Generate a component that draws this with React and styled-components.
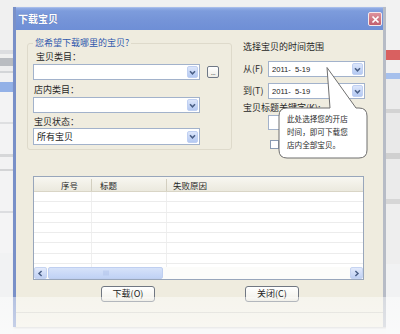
import React from "react";
import styled, { createGlobalStyle } from "styled-components";

const cjk = `"Noto Sans CJK SC", "Noto Sans", sans-serif`;
const latin = `"Liberation Sans", "Noto Sans CJK SC", sans-serif`;

const Global = createGlobalStyle`
  html, body { margin: 0; padding: 0; background: #f1f1f1; }
  body { font-family: ${cjk}; }
`;

const Page = styled.div`
  position: relative;
  width: 400px;
  height: 334px;
  overflow: hidden;
  display: flex;
  align-items: flex-start;
  background: #f1f1f1;
  font-family: ${cjk};
  font-size: 9px;
  color: #2b2b2b;
`;

const Desk = styled.div`
  width: ${(p) => p.$w}px;
  height: 100%;
  flex-shrink: 0;
  display: flex;
  flex-direction: column;
  background: #f1f2f3;
`;

const Stripe = styled.div`
  height: ${(p) => p.$h}px;
  flex-shrink: 0;
  background: ${(p) => p.$c || "transparent"};
`;

const Window = styled.div`
  margin-top: 7px;
  width: 373px;
  height: 320px;
  flex-shrink: 0;
  box-sizing: border-box;
  border-left: 3px solid #7990c8;
  border-right: 3px solid #b7bcc6;
  display: flex;
  flex-direction: column;
  box-shadow: 1px 1px 2px rgba(0, 0, 0, 0.2);
`;

const TitleBar = styled.div`
  height: 23px;
  flex-shrink: 0;
  box-sizing: border-box;
  display: flex;
  align-items: center;
  justify-content: space-between;
  padding: 0 1px 0 2px;
  border-top: 1px solid #a8bdea;
  background: linear-gradient(#93ade5 0, #7d9cdc 3px, #7594d8 55%, #6e8fd6 100%);
`;

const Title = styled.span`
  color: #ffffff;
  font-weight: 700;
  font-size: 10px;
  line-height: 12px;
  text-shadow: 0 0 1px rgba(40, 60, 120, 0.5);
`;

const CloseButton = styled.div`
  width: 14px;
  height: 14px;
  box-sizing: border-box;
  border: 1px solid #f4e8ec;
  border-radius: 2px;
  background: linear-gradient(#de929c, #c25f6e);
  display: flex;
  align-items: center;
  justify-content: center;
`;

const Body = styled.div`
  flex: 1;
  display: flex;
  flex-direction: column;
  background: #efecdf;
`;

const TopSection = styled.div`
  display: flex;
  align-items: flex-start;
  gap: 11px;
  padding: 7px 0 0 11px;
`;

const Group = styled.fieldset`
  margin: 0;
  min-width: 0;
  width: 205px;
  box-sizing: border-box;
  border: 1px solid #dedacb;
  border-radius: 3px;
  padding: 0 0 4px 5px;
  display: flex;
  flex-direction: column;
`;

const Legend = styled.legend`
  padding: 0 2px;
  color: #2f58ad;
  font-size: 9px;
  line-height: 12px;
`;

const FieldLabel = styled.div`
  height: 12px;
  line-height: 12px;
  margin-top: ${(p) => p.$mt || 0}px;
  padding-left: ${(p) => (p.$pl == null ? 3 : p.$pl)}px;
  font-size: 9px;
  color: #262626;
  white-space: nowrap;
`;

const ComboRow = styled.div`
  display: flex;
  align-items: center;
  gap: 7px;
  margin-top: ${(p) => p.$mt || 0}px;
`;

const Combo = styled.div`
  width: ${(p) => p.$w}px;
  height: ${(p) => p.$h || 16}px;
  flex-shrink: 0;
  box-sizing: border-box;
  border: 1px solid #a2b2cb;
  background: #ffffff;
  display: flex;
  align-items: center;
  justify-content: space-between;
  padding: 0 1px 0 3px;
`;

const ComboText = styled.span`
  font-family: ${(p) => (p.$latin ? latin : cjk)};
  font-size: ${(p) => (p.$latin ? "7.6px" : "9px")};
  color: #222;
  white-space: pre;
`;

const DropButton = styled.span`
  width: 11px;
  height: 12px;
  box-sizing: border-box;
  border: 1px solid #c0d0f2;
  border-radius: 2px;
  background: linear-gradient(#dce6fb, #b4c9f2);
  display: flex;
  align-items: center;
  justify-content: center;
  margin-left: auto;
`;

const EllipsisButton = styled.div`
  width: 12px;
  height: 12px;
  box-sizing: border-box;
  border: 1px solid #6f7886;
  border-radius: 2px;
  background: linear-gradient(#ffffff, #eeede6);
  display: flex;
  align-items: flex-end;
  justify-content: center;
  font-family: ${latin};
  font-size: 7px;
  line-height: 8px;
  letter-spacing: -0.5px;
  color: #333;
`;

const RangeColumn = styled.div`
  width: 127px;
  margin-top: 4px;
  display: flex;
  flex-direction: column;
`;

const RangeRow = styled.div`
  display: flex;
  align-items: center;
  margin-top: ${(p) => p.$mt || 0}px;
`;

const RangeLabel = styled.span`
  width: 25px;
  flex-shrink: 0;
  font-size: 9px;
  line-height: 12px;
  white-space: nowrap;
`;

const TextBox = styled.div`
  width: 97px;
  height: 15px;
  box-sizing: border-box;
  margin: 1px 0 0 25px;
  border: 1px solid #a2b2cb;
  background: #ffffff;
`;

const CheckRow = styled.div`
  display: flex;
  align-items: center;
  margin-top: 10px;
  padding-left: 27px;
`;

const CheckBox = styled.span`
  width: 9px;
  height: 9px;
  box-sizing: border-box;
  border: 1px solid #8a9ab2;
  background: #ffffff;
`;

const ResultList = styled.div`
  margin: 26px 0 0 17px;
  width: 331px;
  height: 104px;
  box-sizing: border-box;
  border: 1px solid #98a6bb;
  background: #ffffff;
  display: flex;
  flex-direction: column;
`;

const cols = "58px 75px 1fr";

const HeaderRow = styled.div`
  height: 15px;
  flex-shrink: 0;
  box-sizing: border-box;
  display: grid;
  grid-template-columns: ${cols};
  background: linear-gradient(#f8f7f1, #ebe9de);
  border-bottom: 1px solid #d9d5c6;
`;

const HeaderCell = styled.div`
  display: flex;
  align-items: center;
  padding-left: ${(p) => p.$pl}px;
  font-size: 8.5px;
  line-height: 12px;
  color: #262626;
  border-right: ${(p) => (p.$last ? "none" : "1px solid #d3cfc0")};
  margin: 2px 0;
`;

const Rows = styled.div`
  flex: 1;
  overflow: hidden;
  display: flex;
  flex-direction: column;
`;

const DataRow = styled.div`
  height: 10.3px;
  flex-shrink: 0;
  box-sizing: border-box;
  display: grid;
  grid-template-columns: ${cols};
  border-bottom: 1px solid #ececec;
`;

const DataCell = styled.div`
  border-right: ${(p) => (p.$last ? "none" : "1px solid #efefef")};
`;

const HScroll = styled.div`
  height: 12px;
  flex-shrink: 0;
  display: flex;
  align-items: center;
  background: #fcfcfa;
`;

const ScrollArrow = styled.div`
  width: 13px;
  height: 12px;
  box-sizing: border-box;
  border: 1px solid #c6d4f1;
  border-radius: 2px;
  background: linear-gradient(#e2eafb, #bfd0f3);
  display: flex;
  align-items: center;
  justify-content: center;
  margin-left: ${(p) => (p.$end ? "auto" : "0")};
`;

const ScrollThumb = styled.div`
  width: 115px;
  height: 12px;
  margin-left: 1px;
  box-sizing: border-box;
  border: 1px solid #bfcff0;
  border-radius: 2px;
  background: linear-gradient(#d6e2f9, #c0d2f5);
  display: flex;
  align-items: center;
  justify-content: center;
`;

const ButtonRow = styled.div`
  display: flex;
  gap: 90px;
  padding-left: 85px;
  margin-top: 6px;
`;

const PushButton = styled.div`
  width: 54px;
  height: 16px;
  box-sizing: border-box;
  border: 1px solid #707782;
  border-radius: 3px;
  background: linear-gradient(#ffffff, #f4f3ed 75%, #e3e1d6);
  display: flex;
  align-items: center;
  justify-content: center;
  font-size: 9px;
  line-height: 12px;
  color: #222;
`;

const Footer = styled.div`
  flex: 1;
  margin-top: 10px;
  border-top: 1px solid #cfcdc4;
`;

const Fade = styled.div`
  position: absolute;
  left: 0;
  top: 297px;
  width: 400px;
  height: 37px;
  background: linear-gradient(rgba(255, 255, 255, 0.45), rgba(255, 255, 255, 0.6));
  pointer-events: none;
`;

const Callout = styled.div`
  position: absolute;
  left: 277px;
  top: 64px;
  width: 92px;
  height: 96px;
`;

const CalloutShape = styled.svg`
  position: absolute;
  left: 0;
  top: 0;
`;

const CalloutText = styled.div`
  position: relative;
  padding: 48px 0 0 10px;
  font-size: 7.6px;
  line-height: 13px;
  letter-spacing: 0;
  color: #2a2a2a;
  white-space: nowrap;
`;

const Chevron = ({ dir = "down" }) => {
  const d =
    dir === "down"
      ? "M2 3.2 L4.5 5.8 L7 3.2"
      : dir === "left"
      ? "M5.6 2 L3 4.5 L5.6 7"
      : "M3.4 2 L6 4.5 L3.4 7";
  return (
    <svg width="9" height="9" viewBox="0 0 9 9">
      <path d={d} fill="none" stroke="#4a5f86" strokeWidth="1.5" />
    </svg>
  );
};

const Grip = () => (
  <svg width="6" height="6" viewBox="0 0 6 6">
    <path d="M1 0.5 V5.5 M3 0.5 V5.5 M5 0.5 V5.5" stroke="#a9bde6" strokeWidth="0.8" />
  </svg>
);

const CloseX = () => (
  <svg width="9" height="9" viewBox="0 0 9 9">
    <path d="M1.5 1.5 L7.5 7.5 M7.5 1.5 L1.5 7.5" stroke="#ffffff" strokeWidth="1.7" />
  </svg>
);

function ComboBox({ w, h, text, isLatin }) {
  return (
    <Combo $w={w} $h={h}>
      {text ? <ComboText $latin={isLatin}>{text}</ComboText> : null}
      <DropButton>
        <Chevron />
      </DropButton>
    </Combo>
  );
}

const leftStripes = [
  [50, "#f0f0f0"],
  [4, "#dcdde0"],
  [4, "#f0f0f0"],
  [8, "#b9bcc1"],
  [5, "#eeeeef"],
  [2, "#d3d5d8"],
  [9, "#f1f1f2"],
  [10, "#93b1e7"],
  [30, "#f3f3f4"],
  [2, "#dedfe1"],
  [30, "#f3f3f4"],
  [3, "#d6d7d9"],
  [12, "#f2f2f3"],
  [2, "#d3d4d6"],
  [40, "#f3f3f4"],
  [2, "#dcdde0"],
  [40, "#f4f4f5"],
];

const rightStripes = [
  [50, "#f2f2f2"],
  [10, "#d96060"],
  [13, "#f0f0f0"],
  [6, "#a6c0ec"],
  [30, "#ececec"],
  [4, "#d3d3d3"],
  [40, "#e9e9e9"],
  [6, "#d0d0d0"],
  [40, "#ebebeb"],
  [5, "#d6d6d6"],
  [60, "#eeeeee"],
];

export default function App() {
  const rows = Array.from({ length: 8 });
  return (
    <Page>
      <Global />
      <Desk $w={13}>
        {leftStripes.map(([h, c], i) => (
          <Stripe key={i} $h={h} $c={c} />
        ))}
      </Desk>

      <Window>
        <TitleBar>
          <Title>下载宝贝</Title>
          <CloseButton>
            <CloseX />
          </CloseButton>
        </TitleBar>

        <Body>
          <TopSection>
            <Group>
              <Legend>您希望下载哪里的宝贝?</Legend>
              <FieldLabel $mt={2}>宝贝类目：</FieldLabel>
              <ComboRow $mt={1}>
                <ComboBox w={167} />
                <EllipsisButton>...</EllipsisButton>
              </ComboRow>
              <FieldLabel $mt={4} $pl={1}>店内类目：</FieldLabel>
              <ComboRow $mt={1}>
                <ComboBox w={167} />
              </ComboRow>
              <FieldLabel $mt={3} $pl={1}>宝贝状态：</FieldLabel>
              <ComboRow>
                <ComboBox w={167} h={17} text="所有宝贝" />
              </ComboRow>
            </Group>

            <RangeColumn>
              <FieldLabel $pl={0}>选择宝贝的时间范围</FieldLabel>
              <RangeRow $mt={8}>
                <RangeLabel>从(F)</RangeLabel>
                <ComboBox w={97} text="2011-  5-19" isLatin />
              </RangeRow>
              <RangeRow $mt={6}>
                <RangeLabel>到(T)</RangeLabel>
                <ComboBox w={97} text="2011-  5-19" isLatin />
              </RangeRow>
              <FieldLabel $mt={3} $pl={0}>宝贝标题关键字(K):</FieldLabel>
              <TextBox />
              <CheckRow>
                <CheckBox />
              </CheckRow>
            </RangeColumn>
          </TopSection>

          <ResultList>
            <HeaderRow>
              <HeaderCell $pl={27}>序号</HeaderCell>
              <HeaderCell $pl={8}>标题</HeaderCell>
              <HeaderCell $pl={6} $last>
                失败原因
              </HeaderCell>
            </HeaderRow>
            <Rows>
              {rows.map((_, i) => (
                <DataRow key={i}>
                  <DataCell />
                  <DataCell />
                  <DataCell $last />
                </DataRow>
              ))}
            </Rows>
            <HScroll>
              <ScrollArrow>
                <Chevron dir="left" />
              </ScrollArrow>
              <ScrollThumb>
                <Grip />
              </ScrollThumb>
              <ScrollArrow $end>
                <Chevron dir="right" />
              </ScrollArrow>
            </HScroll>
          </ResultList>

          <ButtonRow>
            <PushButton>下载(O)</PushButton>
            <PushButton>关闭(C)</PushButton>
          </ButtonRow>
          <Footer />
        </Body>
      </Window>

      <Desk $w={14}>
        {rightStripes.map(([h, c], i) => (
          <Stripe key={i} $h={h} $c={c} />
        ))}
      </Desk>

      <Callout>
        <CalloutShape width="92" height="96" viewBox="0 0 92 96">
          <path
            d="M10 44 L53 44 L50 3.5 L79 44 L82 44 Q90 44 90 52 L90 86 Q90 94 82 94 L10 94 Q2 94 2 86 L2 52 Q2 44 10 44 Z"
            fill="#ffffff"
            stroke="#6f6f6f"
            strokeWidth="1"
          />
        </CalloutShape>
        <CalloutText>
          <div>此处选择您的开店</div>
          <div>时间，即可下载您</div>
          <div>店内全部宝贝。</div>
        </CalloutText>
      </Callout>

      <Fade />
    </Page>
  );
}
